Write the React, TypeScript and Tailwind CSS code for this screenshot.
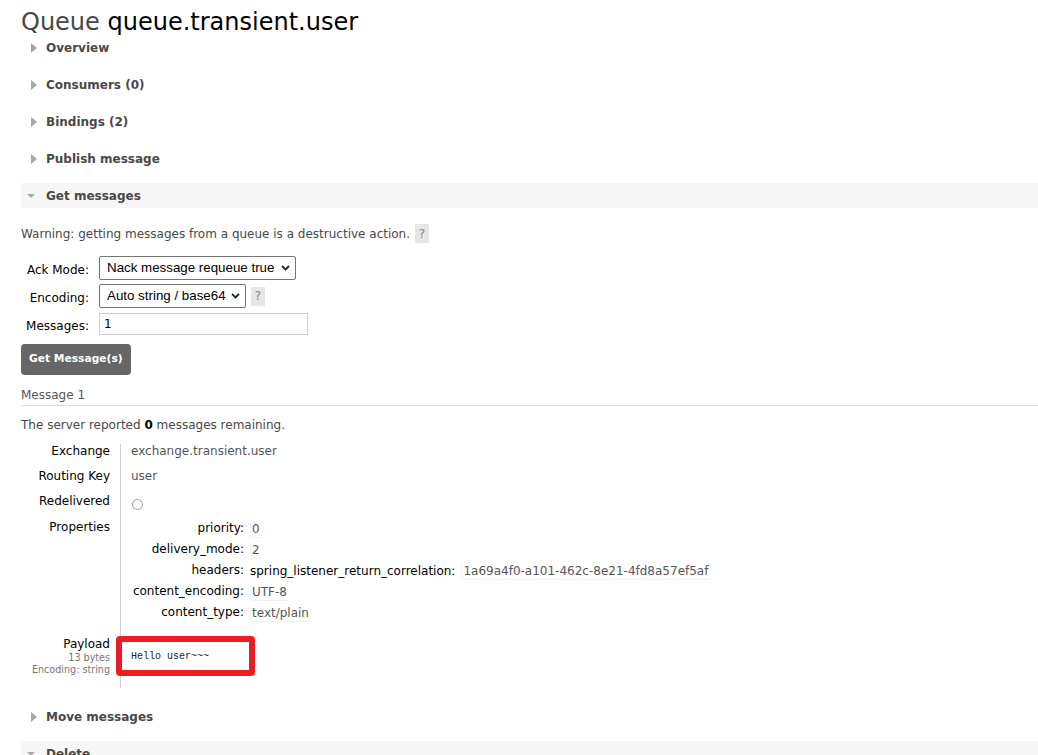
import React from "react";

const font = "font-['DejaVu_Sans',Verdana,sans-serif]";

const Section = ({ title, open = false }: { title: string; open?: boolean }) => (
  <div
    className={`flex items-center h-[25px] ${open ? "bg-[#f7f7f7]" : ""}`}
  >
    <div className="w-[25px] flex justify-center items-center pt-[1px]">
      {open ? (
        <span className="block w-0 h-0 border-l-[4px] border-r-[4px] border-t-[4px] border-l-transparent border-r-transparent border-t-[#aaaaaa] ml-[-5px]" />
      ) : (
        <span className="block w-0 h-0 border-t-[5px] border-b-[5px] border-l-[6px] border-t-transparent border-b-transparent border-l-[#a5a5a5]" />
      )}
    </div>
    <span className="text-[12px] font-bold text-[#484848] leading-[15px] pt-[2px]">{title}</span>
  </div>
);

const Help = () => (
  <span className="inline-flex items-center justify-center w-[14px] h-[19px] bg-[#e6e6e6] text-[#888] text-[12px]">
    ?
  </span>
);

const Chevron = () => (
  <svg width="9" height="6" viewBox="0 0 9 6" className="shrink-0">
    <path d="M1 1l3.5 3.5L8 1" fill="none" stroke="#222" strokeWidth="1.8" />
  </svg>
);

const Select = ({ value, w }: { value: string; w: string }) => (
  <div
    className={`${w} h-[24px] border border-[#767676] rounded-[2px] flex items-center justify-between pl-[7px] pr-[5px] bg-white font-['Liberation_Sans',Arial,sans-serif] text-[13.33px] text-black`}
  >
    <span>{value}</span>
    <Chevron />
  </div>
);

const Val = ({ children }: { children: React.ReactNode }) => (
  <span className="text-[#555] border-b border-l border-[#f0f0f0] rounded-bl-[3px] pl-[1px] pr-[1px]">
    {children}
  </span>
);

const props: [string, React.ReactNode][] = [
  ["priority:", <Val>0</Val>],
  ["delivery_mode:", <Val>2</Val>],
  [
    "headers:",
    <span className="flex gap-[6px]">
      <span className="text-black">spring_listener_return_correlation:</span>
      <Val>1a69a4f0-a101-462c-8e21-4fd8a57ef5af</Val>
    </span>,
  ],
  ["content_encoding:", <Val>UTF-8</Val>],
  ["content_type:", <Val>text/plain</Val>],
];

export default function App() {
  return (
    <div className={`${font} bg-white w-[1038px] h-[755px] overflow-hidden pl-[21px] text-[12px] text-[#484848]`}>
      <h1 className="pt-[9px] text-[24px] leading-[26px] text-[#484848] whitespace-nowrap">
        Queue <span className="text-black">queue.transient.user</span>
      </h1>

      <div className="flex flex-col gap-[12px]">
        <Section title="Overview" />
        <Section title="Consumers (0)" />
        <Section title="Bindings (2)" />
        <Section title="Publish message" />
        <Section title="Get messages" open />
      </div>

      <div className="flex items-center gap-[5px] h-[19px] mt-[16px]">
        <span className="leading-[15px] pt-[1px]">Warning: getting messages from a queue is a destructive action.</span>
        <Help />
      </div>

      <div className="flex flex-col mt-[13px] text-black">
        <div className="flex items-center gap-[10px]">
          <span className="w-[68px] text-right pt-[3px]">Ack Mode:</span>
          <Select value="Nack message requeue true" w="w-[197px]" />
        </div>
        <div className="flex items-center gap-[10px] mt-[4px]">
          <span className="w-[68px] text-right pt-[3px]">Encoding:</span>
          <Select value="Auto string / base64" w="w-[147px]" />
          <span className="ml-[-5px]">
            <Help />
          </span>
        </div>
        <div className="flex items-center gap-[10px] mt-[5px]">
          <span className="w-[68px] text-right pt-[3px]">Messages:</span>
          <div className="w-[209px] h-[22px] border border-[#cccccc] flex items-center pl-[4px] text-[12px] text-black">
            1
          </div>
        </div>
        <div className="mt-[9px]">
          <button className="h-[31px] px-[8px] bg-[#666666] rounded-[4px] text-white text-[10.7px] font-bold">
            Get Message(s)
          </button>
        </div>
      </div>

      <div className="mt-[13px] leading-[15px] pb-[2px] border-b border-[#dddddd] text-[#555]">
        Message 1
      </div>

      <p className="mt-[12px] leading-[15px]">
        The server reported <b className="text-black">0</b> messages remaining.
      </p>

      <div className="mt-[11px] grid grid-cols-[99px_1fr] leading-[15px] text-black">
        <div className="text-right pr-[10px] pb-[10px]">Exchange</div>
        <div className="border-l border-[#d0d0d0] pl-[10px] pb-[10px] text-[#555]">exchange.transient.user</div>

        <div className="text-right pr-[10px] pb-[10px]">Routing Key</div>
        <div className="border-l border-[#d0d0d0] pl-[10px] pb-[10px] text-[#555]">user</div>

        <div className="text-right pr-[10px] pb-[10px]">Redelivered</div>
        <div className="border-l border-[#d0d0d0] pl-[11px] pb-[10px]">
          <span className="block w-[11px] h-[11px] rounded-full border border-[#9a9a9a] mt-[5px]" />
        </div>

        <div className="text-right pr-[10px] pb-[10px]">Properties</div>
        <div className="border-l border-[#d0d0d0] pl-[10px] pb-[10px]">
          <div className="grid grid-cols-[113px_auto] w-max">
            {props.map(([k, v]) => (
              <React.Fragment key={k}>
                <div className="text-right pt-[1px] pb-[5px] text-black">{k}</div>
                <div className="pl-[6px] pt-[2px] pb-[3px] flex">{v}</div>
              </React.Fragment>
            ))}
          </div>
        </div>

        <div className="text-right pr-[10px] pt-[2px] pb-[12px] flex flex-col items-end">
          <span>Payload</span>
          <span className="text-[9.6px] leading-[12px] text-[#777]">13 bytes</span>
          <span className="text-[9.6px] leading-[12px] text-[#777]">Encoding: string</span>
        </div>
        <div className="border-l border-[#d0d0d0] pb-[12px]">
          <div className="ml-[-5px] mt-[1px] w-[139px] h-[40px] border-[6px] border-[#ed1c24] rounded-[4px] bg-white flex items-center pl-[9px] pt-[2px]">
            <pre className="font-['Liberation_Mono','Courier_New',monospace] text-[10px] text-[#222] leading-[12px]">Hello user~~~</pre>
          </div>
        </div>
      </div>

      <div className="flex flex-col gap-[12px] mt-[16px]">
        <Section title="Move messages" />
        <Section title="Delete" open />
      </div>
    </div>
  );
}
